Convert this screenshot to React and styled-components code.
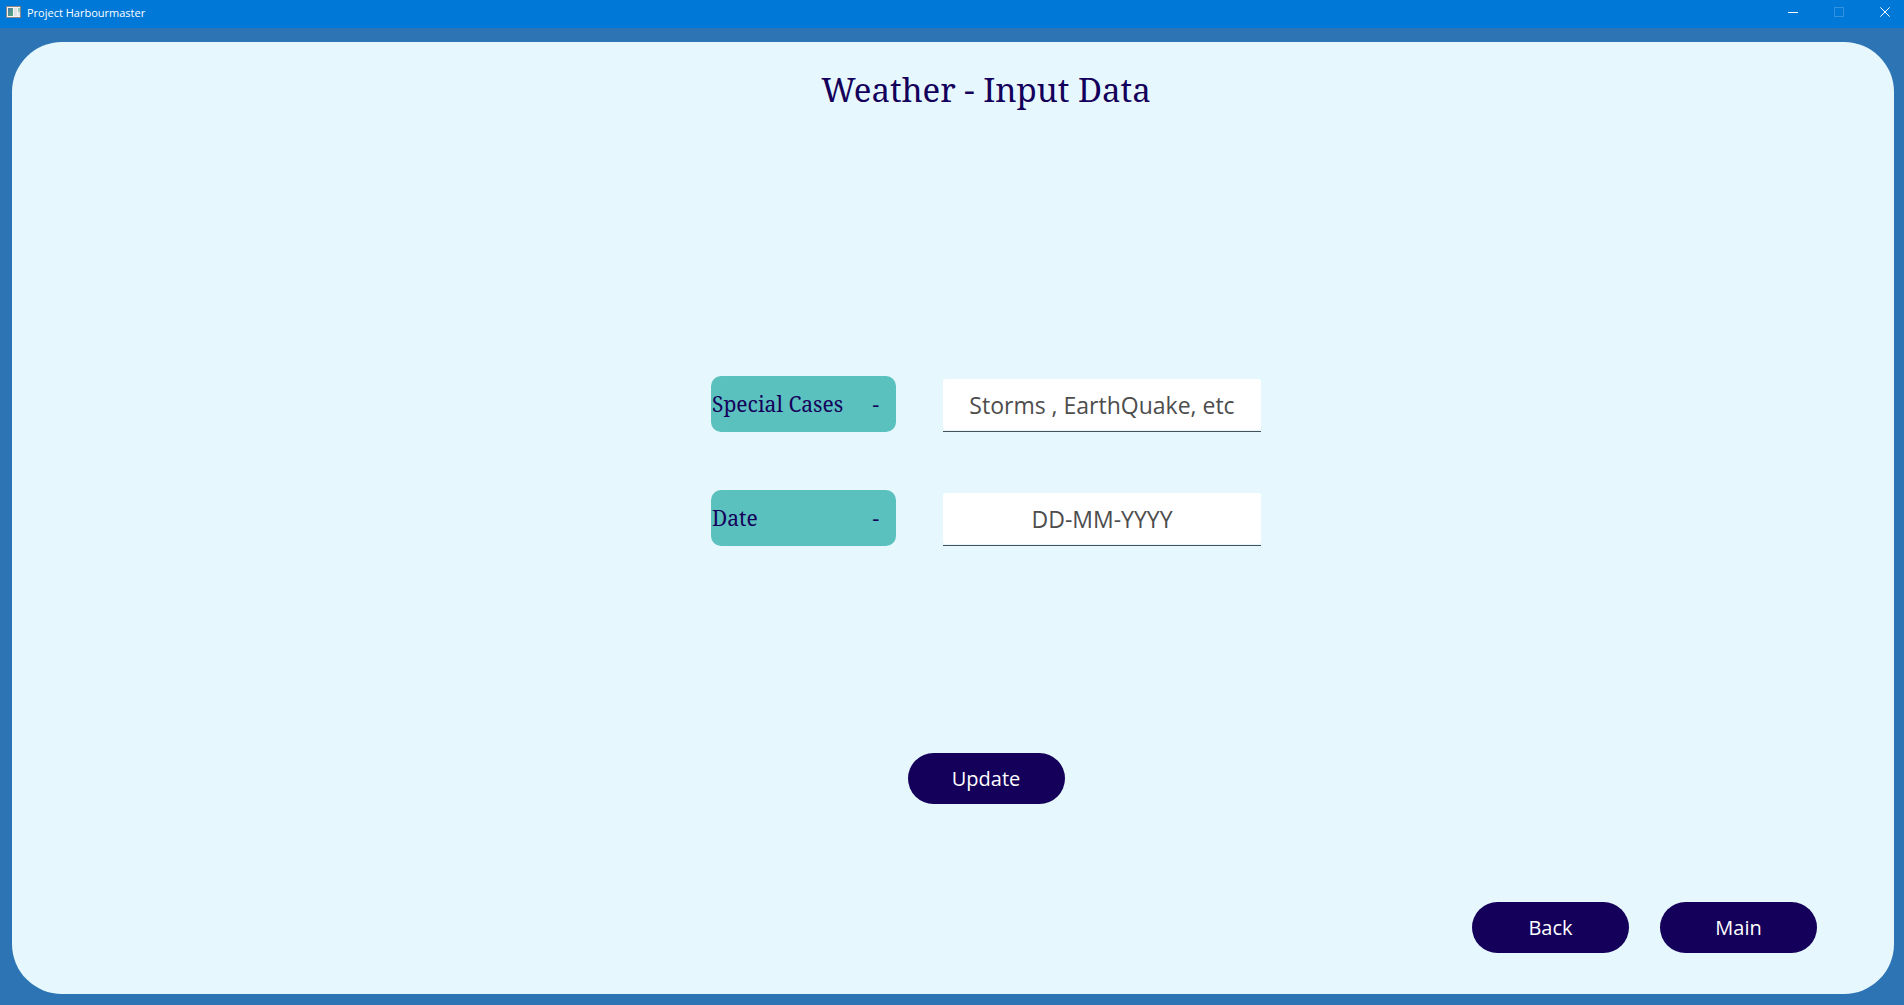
import React from "react";
import styled, { createGlobalStyle } from "styled-components";

const sans = '"Open Sans", "Noto Sans", sans-serif';
const serif = '"Noto Serif", "Liberation Serif", serif';

const GlobalStyle = createGlobalStyle`
  *, *::before, *::after { box-sizing: border-box; }
  body { margin: 0; background: #2d74b5; font-family: ${sans}; }
`;

const Window = styled.div`
  display: flex;
  flex-direction: column;
  min-height: 100vh;
`;

const TitleBar = styled.header`
  display: flex;
  align-items: center;
  justify-content: space-between;
  height: 28px;
  padding: 0 4px 4px 6px;
  background: #0078d7;
  color: #fff;
`;

const AppName = styled.div`
  display: flex;
  align-items: center;
  gap: 6px;
`;

const AppTitle = styled.span`
  padding-top: 2px;
  font-size: 11px;
  line-height: 16px;
`;

const WindowControls = styled.div`
  display: flex;
  gap: 16px;
`;

const ControlButton = styled.button`
  display: flex;
  align-items: center;
  justify-content: center;
  width: 30px;
  height: 24px;
  padding: 0;
  border: 0;
  background: transparent;
  color: ${({ disabled }) => (disabled ? "#3391df" : "#fff")};
`;

const Body = styled.div`
  display: flex;
  flex: 1;
  padding: 14px 10px 11px 12px;
`;

const Panel = styled.main`
  display: flex;
  flex: 1;
  flex-direction: column;
  border-radius: 50px;
  background: #e6f8fd;
`;

const Content = styled.form`
  display: flex;
  flex-direction: column;
  align-items: center;
  padding: 24px 0 0 66px;
`;

const Heading = styled.h1`
  margin: 0;
  color: #14005a;
  font: 400 33px/48px ${serif};
`;

const Fields = styled.div`
  display: flex;
  flex-direction: column;
  gap: 58px;
  margin: 262px 0 207px;
`;

const Field = styled.div`
  display: flex;
  align-items: flex-end;
  gap: 47px;
`;

const FieldLabel = styled.label`
  display: flex;
  align-items: center;
  justify-content: space-between;
  width: 185px;
  height: 56px;
  padding: 0 17px 0 1px;
  border-radius: 10px;
  background: #5ac1be;
  color: #14005a;
  font: 400 21px/32px ${serif};
`;

const InputLine = styled.div`
  width: 318px;
  padding-bottom: 1px;
  border-bottom: 1px solid #465257;
`;

const TextInput = styled.input`
  display: block;
  width: 100%;
  height: 51px;
  padding: 0;
  border: 0;
  border-radius: 3px;
  outline: 0;
  background: #fff;
  color: #4d4d4d;
  font: 400 23px/32px ${sans};
  text-align: center;

  &::placeholder {
    color: #4d4d4d;
    opacity: 1;
  }
`;

const PillButton = styled.button`
  width: 157px;
  height: 51px;
  padding: 0;
  border: 0;
  border-radius: 26px;
  background: #14005a;
  color: #fff;
  font: 400 20px/28px ${sans};
`;

const Navigation = styled.nav`
  display: flex;
  justify-content: flex-end;
  gap: 31px;
  margin-top: auto;
  padding: 0 77px 41px;
`;

const AppIcon = () => (
  <svg width="15" height="12" viewBox="0 0 15 12" aria-hidden="true">
    <defs>
      <linearGradient id="screen" x1="0" y1="0" x2="1" y2="1">
        <stop offset="0" stopColor="#4a78a8" />
        <stop offset="1" stopColor="#55ad78" />
      </linearGradient>
    </defs>
    <rect width="15" height="12" fill="#8c8583" />
    <rect x="1" y="1" width="13" height="10" fill="#f4f4f4" />
    <rect x="2" y="2" width="5" height="8" fill="url(#screen)" />
    <rect x="8" y="2" width="3" height="8" fill="#dfe3e6" />
    <rect x="12" y="2" width="2" height="4" fill="#9ccdb8" />
    <rect x="12" y="6" width="2" height="4" fill="#e4e7e9" />
  </svg>
);

const glyphs = {
  minimize: <path d="M0 5.5H10" />,
  maximize: <rect x="0.5" y="0.5" width="9" height="9" />,
  close: <path d="M0.3 0.3L9.7 9.7M9.7 0.3L0.3 9.7" />,
};

const ControlGlyph = ({ name }) => (
  <svg width="10" height="10" viewBox="0 0 10 10" fill="none" stroke="currentColor" strokeWidth="1" aria-hidden="true">
    {glyphs[name]}
  </svg>
);

const fields = [
  { id: "special-cases", label: "Special Cases", placeholder: "Storms , EarthQuake, etc" },
  { id: "date", label: "Date", placeholder: "DD-MM-YYYY" },
];

export default function App() {
  return (
    <Window>
      <GlobalStyle />
      <TitleBar>
        <AppName>
          <AppIcon />
          <AppTitle>Project Harbourmaster</AppTitle>
        </AppName>
        <WindowControls>
          <ControlButton type="button" aria-label="Minimize">
            <ControlGlyph name="minimize" />
          </ControlButton>
          <ControlButton type="button" aria-label="Maximize" disabled>
            <ControlGlyph name="maximize" />
          </ControlButton>
          <ControlButton type="button" aria-label="Close">
            <ControlGlyph name="close" />
          </ControlButton>
        </WindowControls>
      </TitleBar>
      <Body>
        <Panel>
          <Content onSubmit={(event) => event.preventDefault()}>
            <Heading>Weather - Input Data</Heading>
            <Fields>
              {fields.map(({ id, label, placeholder }) => (
                <Field key={id}>
                  <FieldLabel htmlFor={id}>
                    <span>{label}</span>
                    <span>-</span>
                  </FieldLabel>
                  <InputLine>
                    <TextInput id={id} type="text" placeholder={placeholder} />
                  </InputLine>
                </Field>
              ))}
            </Fields>
            <PillButton type="submit">Update</PillButton>
          </Content>
          <Navigation>
            <PillButton type="button">Back</PillButton>
            <PillButton type="button">Main</PillButton>
          </Navigation>
        </Panel>
      </Body>
    </Window>
  );
}
